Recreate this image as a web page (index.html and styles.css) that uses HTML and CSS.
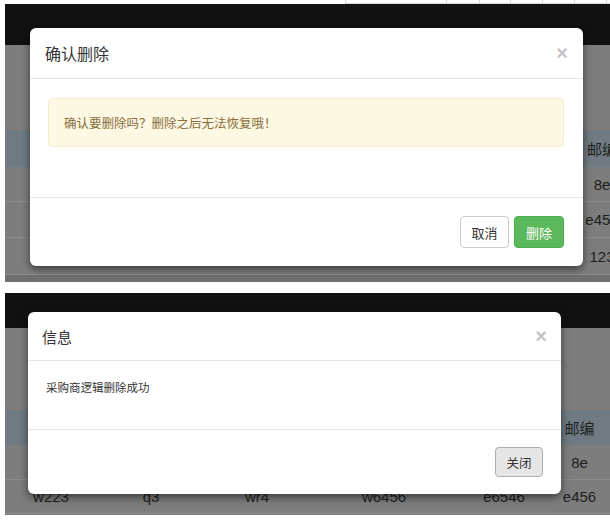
FILE: index.html
```html
<!DOCTYPE html>
<html lang="zh">
<head>
<meta charset="utf-8">
<title>确认删除</title>
<link rel="stylesheet" href="styles.css">
</head>
<body>
<div class="page">
  <div class="topstrip">
    <div class="cell w101"></div><div class="cell w33"></div><div class="cell w31"></div><div class="cell w32"></div><div class="cell w32"></div><div class="cell w32"></div><div class="cell w10"></div>
  </div>

  <div class="shot shot1">
    <div class="navbar nav1"></div>
    <div class="spacer sp1"></div>
    <div class="trow thead h37"><span class="c-last">邮编</span></div>
    <div class="trow h35"><span class="c-last">8e</span></div>
    <div class="trow h36"><span class="c-last">e456</span></div>
    <div class="trow h37"><span class="c-last">123</span></div>
    <div class="trow tail"></div>

    <div class="modal m1">
      <div class="modal-header h1">
        <span class="title t1">确认删除</span>
        <span class="close">×</span>
      </div>
      <div class="modal-body b1">
        <div class="alert">确认要删除吗？删除之后无法恢复哦！</div>
      </div>
      <div class="modal-footer f1">
        <button class="btn btn-default">取消</button>
        <button class="btn btn-success">删除</button>
      </div>
    </div>
  </div>

  <div class="shot shot2">
    <div class="navbar nav2"></div>
    <div class="spacer sp2"></div>
    <div class="grow thead h35"><span></span><span></span><span></span><span></span><span></span><span>邮编</span></div>
    <div class="grow h35"><span></span><span></span><span></span><span></span><span></span><span>8e</span></div>
    <div class="grow h34"><span>w223</span><span>q3</span><span>wr4</span><span>w6456</span><span>e6546</span><span>e456</span></div>

    <div class="modal m2">
      <div class="modal-header h2">
        <span class="title t2">信息</span>
        <span class="close">×</span>
      </div>
      <div class="modal-body b2">采购商逻辑删除成功</div>
      <div class="modal-footer f2">
        <button class="btn btn-active">关闭</button>
      </div>
    </div>
  </div>
</div>
</body>
</html>
```

FILE: styles.css
```css
* { box-sizing: border-box; }
html, body { margin: 0; padding: 0; background: #fff; }
body {
  font-family: "Liberation Sans", "Noto Sans CJK SC", sans-serif;
  color: #333;
  width: 610px;
  height: 520px;
  overflow: hidden;
}
.page { display: flex; flex-direction: column; }

.topstrip {
  height: 4px;
  display: flex;
  padding-left: 345px;
}
.cell { height: 4px; border-left: 1px solid #d6d6d6; border-bottom: 1px solid #d6d6d6; }
.w101 { width: 101px; } .w33 { width: 33px; } .w31 { width: 31px; }
.w32 { width: 32px; } .w10 { flex: 1; }

.shot {
  position: relative;
  margin-left: 5px;
  width: 605px;
  overflow: hidden;
  background: #7d7d7d;
  display: flex;
  flex-direction: column;
}
.shot1 { height: 278px; }
.shot2 { height: 222px; margin-top: 11px; }

.navbar { background: #111; flex: none; }
.nav1 { height: 41px; }
.nav2 { height: 35px; }
.spacer { flex: none; }
.sp1 { height: 85px; }
.sp2 { height: 82px; }

.trow, .grow {
  flex: none;
  border-bottom: 1px solid #8c8c8c;
  font-size: 15px;
  color: #1e1e1e;
  align-items: center;
}
.trow { display: grid; grid-template-columns: 579px 36px; }
.trow .c-last { grid-column: 2; text-align: center; white-space: nowrap; }
.grow { display: grid; grid-template-columns: 92px 108px 104px 150px 90px 61px; }
.grow span { text-align: center; white-space: nowrap; }
.thead { background: #6f7a82; border-bottom-color: #6f7a82; }
.h34 { height: 34px; } .h35 { height: 35px; } .h36 { height: 36px; } .h37 { height: 37px; }
.tail { height: 10px; background: #6f6f6f; border: 0; }

.modal {
  position: absolute;
  background: #fff;
  border-radius: 6px;
  box-shadow: 0 3px 9px rgba(0, 0, 0, 0.55);
  display: flex;
  flex-direction: column;
}
.m1 { left: 25px; top: 24px; width: 553px; height: 238px; }
.m2 { left: 23px; top: 19px; width: 533px; height: 182px; }

.modal-header {
  display: flex;
  align-items: center;
  justify-content: space-between;
  border-bottom: 1px solid #e5e5e5;
  flex: none;
}
.h1 { height: 51px; padding: 0 15px; }
.h2 { height: 49px; padding: 0 14px; }
.title { color: #333; }
.t1 { font-size: 16px; }
.t2 { font-size: 15px; }
.close {
  font-family: "Liberation Sans", sans-serif;
  font-weight: bold;
  font-size: 20px;
  line-height: 1;
  color: #c4c4c4;
}

.b1 { height: 118px; padding: 19px 19px 0 18px; flex: none; }
.alert {
  height: 49px;
  display: flex;
  align-items: center;
  padding: 0 15px;
  background: #fcf8e3;
  border: 1px solid #faebcc;
  border-radius: 4px;
  color: #8a6d3b;
  font-size: 12.5px;
}
.b2 {
  height: 68px;
  padding: 17px 18px 0 18px;
  font-size: 11.5px;
  line-height: 20px;
  color: #333;
  flex: none;
}

.modal-footer {
  border-top: 1px solid #e5e5e5;
  display: flex;
  justify-content: flex-end;
  align-items: flex-start;
  flex: 1;
}
.f1 { padding: 18px 19px 0 0; gap: 5px; }
.f2 { padding: 17px 18px 0 0; }

.btn {
  font-family: "Liberation Sans", "Noto Sans CJK SC", sans-serif;
  border-radius: 4px;
  border: 1px solid #ccc;
  padding: 0;
  margin: 0;
}
.f1 .btn { width: 49px; height: 32px; font-size: 13px; }
.btn-default { background: #fff; color: #333; }
.btn-success { background: #5cb85c; border-color: #4cae4c; color: #fff; width: 50px !important; }
.btn-active {
  width: 48px; height: 30px; font-size: 12.5px;
  background: #e6e6e6; border-color: #adadad; color: #333;
}
```
